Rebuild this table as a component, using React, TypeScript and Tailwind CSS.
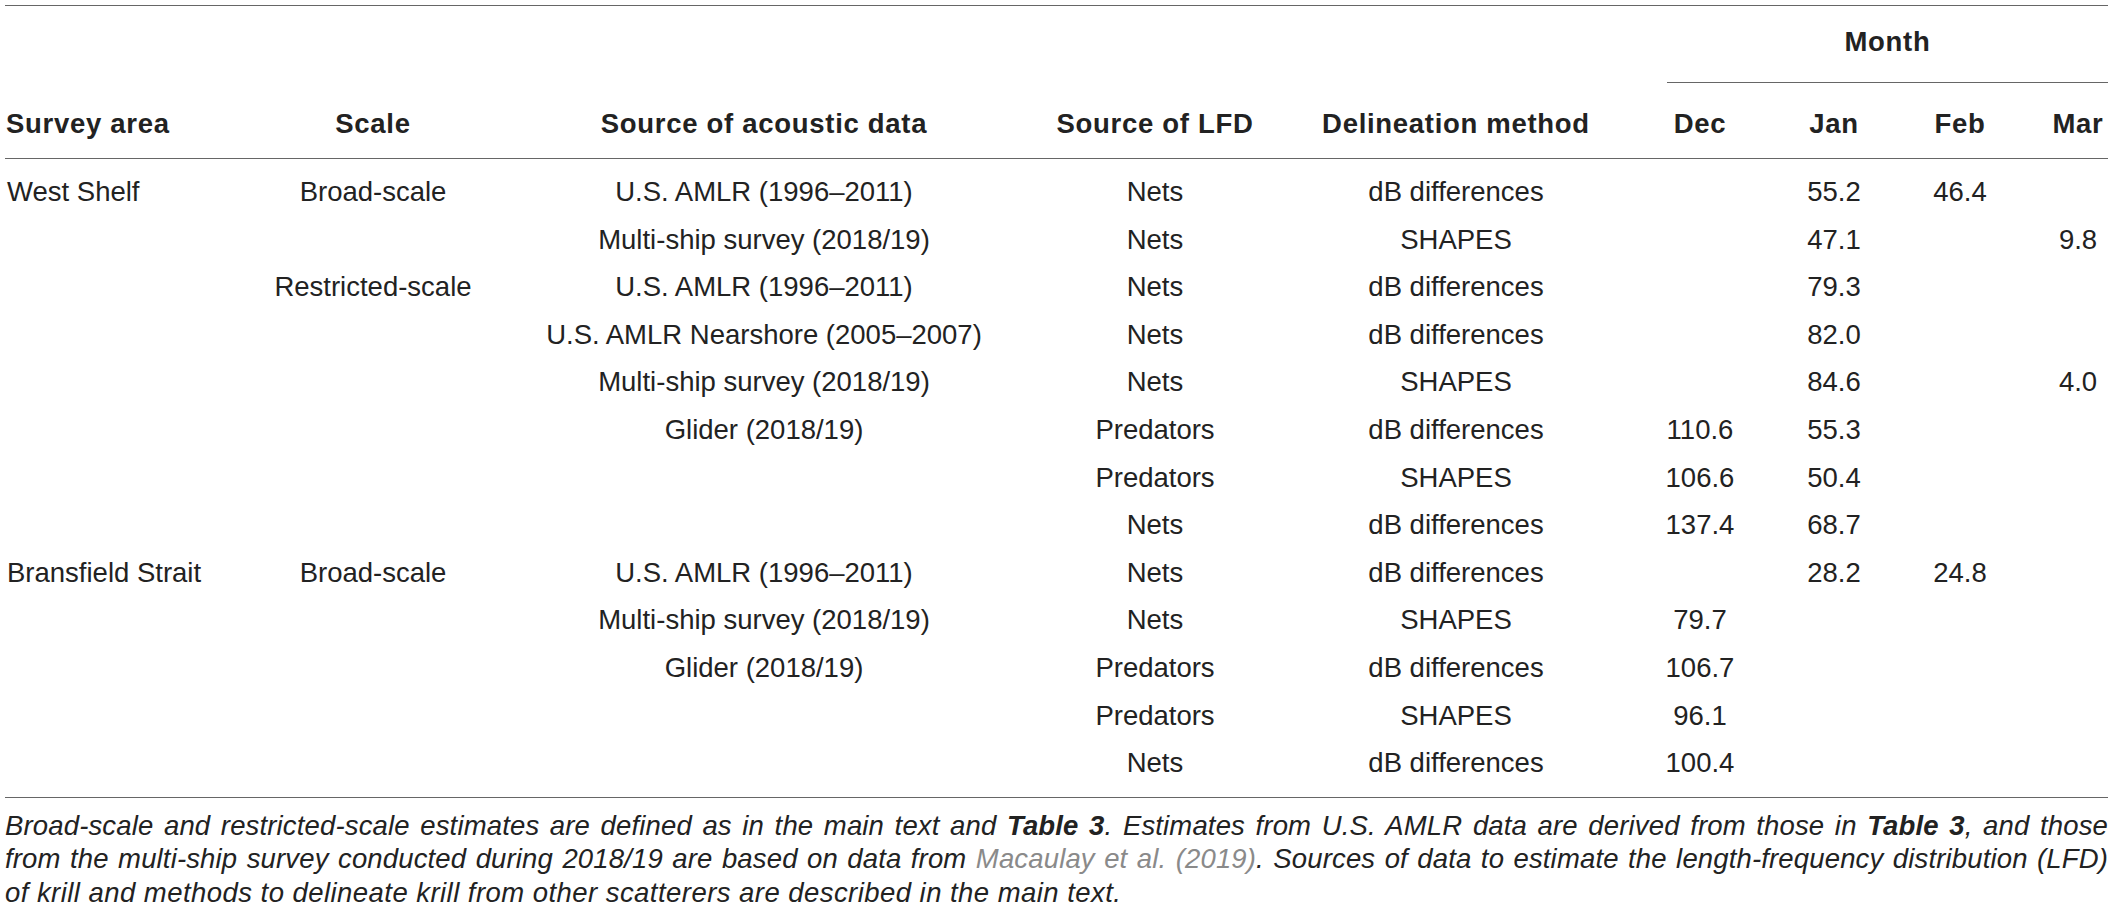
import React from "react";

const cols = "grid grid-cols-[255px_226px_556px_226px_376px_112px_156px_96px_100px]";

const rows: string[][] = [
  ["West Shelf", "Broad-scale", "U.S. AMLR (1996–2011)", "Nets", "dB differences", "", "55.2", "46.4", ""],
  ["", "", "Multi-ship survey (2018/19)", "Nets", "SHAPES", "", "47.1", "", "9.8"],
  ["", "Restricted-scale", "U.S. AMLR (1996–2011)", "Nets", "dB differences", "", "79.3", "", ""],
  ["", "", "U.S. AMLR Nearshore (2005–2007)", "Nets", "dB differences", "", "82.0", "", ""],
  ["", "", "Multi-ship survey (2018/19)", "Nets", "SHAPES", "", "84.6", "", "4.0"],
  ["", "", "Glider (2018/19)", "Predators", "dB differences", "110.6", "55.3", "", ""],
  ["", "", "", "Predators", "SHAPES", "106.6", "50.4", "", ""],
  ["", "", "", "Nets", "dB differences", "137.4", "68.7", "", ""],
  ["Bransfield Strait", "Broad-scale", "U.S. AMLR (1996–2011)", "Nets", "dB differences", "", "28.2", "24.8", ""],
  ["", "", "Multi-ship survey (2018/19)", "Nets", "SHAPES", "79.7", "", "", ""],
  ["", "", "Glider (2018/19)", "Predators", "dB differences", "106.7", "", "", ""],
  ["", "", "", "Predators", "SHAPES", "96.1", "", "", ""],
  ["", "", "", "Nets", "dB differences", "100.4", "", "", ""],
];

export default function App() {
  return (
    <div
      className="w-[2117px] h-[916px] overflow-hidden bg-white text-[#222222]"
      style={{ fontFamily: '"Liberation Sans", Arial, sans-serif' }}
    >
      <div className="ml-[5px] mt-[5px] w-[2103px]">
        {/* Header */}
        <div className="flex h-[154px] border-t border-b border-[#666666] font-bold tracking-[0.7px] text-[27.5px] leading-[30px]">
          <div className="w-[255px] flex items-end pb-[19px] pl-[1px]">Survey area</div>
          <div className="w-[226px] flex items-end justify-center pb-[19px]">Scale</div>
          <div className="w-[556px] flex items-end justify-center pb-[19px]">Source of acoustic data</div>
          <div className="w-[226px] flex items-end justify-center pb-[19px]">Source of LFD</div>
          <div className="w-[376px] flex items-end justify-center pb-[19px]">Delineation method</div>
          <div className="w-[464px] flex flex-col">
            <div className="ml-[23px] h-[77px] border-b border-[#666666] pt-[21px] text-center">Month</div>
            <div className="flex flex-1 items-end pb-[19px]">
              <div className="w-[112px] text-center">Dec</div>
              <div className="w-[156px] text-center">Jan</div>
              <div className="w-[96px] text-center">Feb</div>
              <div className="w-[100px] pl-[40px] text-center">Mar</div>
            </div>
          </div>
        </div>

        {/* Body */}
        <div className="pt-[9px] pb-[10px] border-b border-[#666666] text-[27.5px]">
          {rows.map((r, i) => (
            <div key={i} className={`${cols} h-[47.6px] leading-[47.6px] whitespace-nowrap`}>
              <div className="pl-[2px]">{r[0]}</div>
              <div className="text-center">{r[1]}</div>
              <div className="text-center">{r[2]}</div>
              <div className="text-center">{r[3]}</div>
              <div className="text-center">{r[4]}</div>
              <div className="text-center">{r[5]}</div>
              <div className="text-center">{r[6]}</div>
              <div className="text-center">{r[7]}</div>
              <div className="pl-[40px] text-center">{r[8]}</div>
            </div>
          ))}
        </div>

        {/* Caption */}
        <div className="pt-[11px] italic text-[27.5px] leading-[33.5px] tracking-[0.15px]">
          <div className="text-justify [text-align-last:justify]">
            Broad-scale and restricted-scale estimates are defined as in the main text and <b>Table 3</b>. Estimates from U.S. AMLR data are derived from those in <b>Table 3</b>, and those
          </div>
          <div className="text-justify [text-align-last:justify]">
            from the multi-ship survey conducted during 2018/19 are based on data from <span className="text-[#8a8a8a]">Macaulay et al. (2019)</span>. Sources of data to estimate the length-frequency distribution (LFD)
          </div>
          <div className="tracking-[0.45px]">of krill and methods to delineate krill from other scatterers are described in the main text.</div>
        </div>
      </div>
    </div>
  );
}
